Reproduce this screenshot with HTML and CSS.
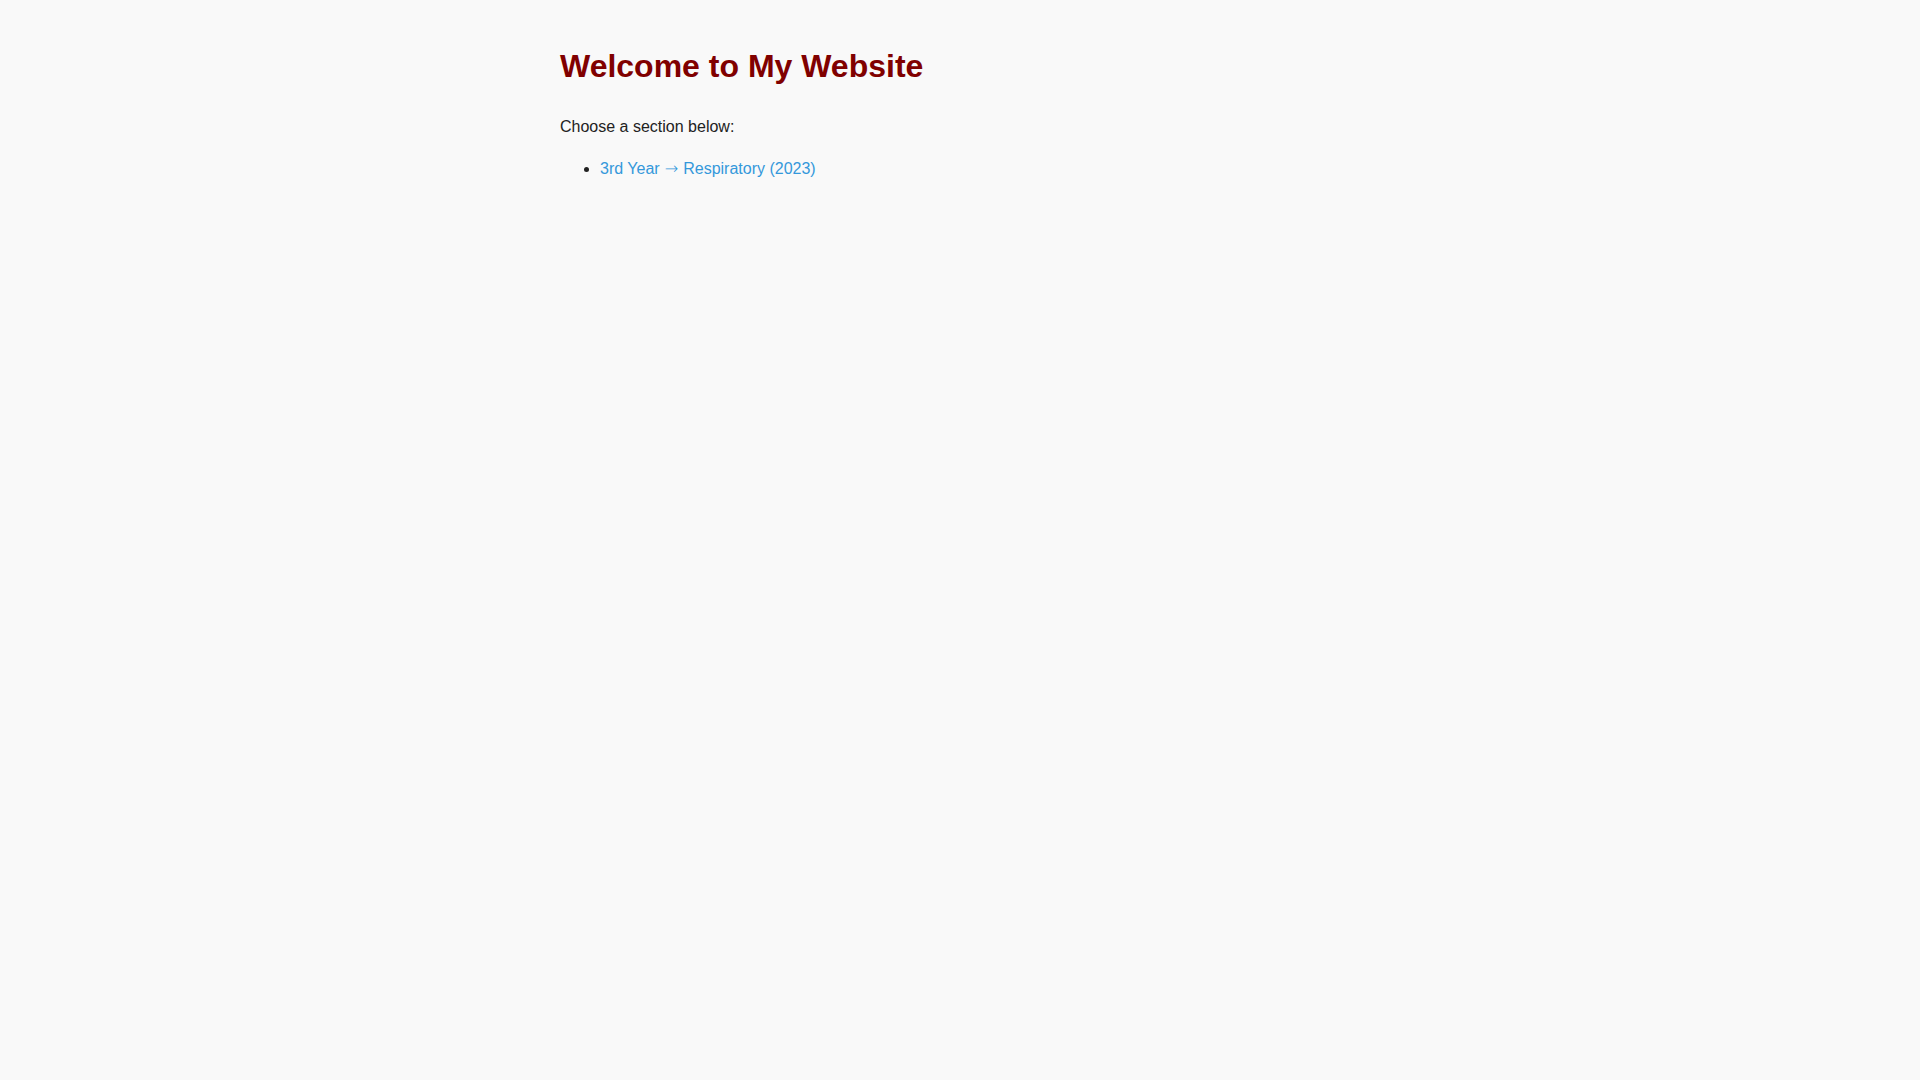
FILE: index.html
```html
<!DOCTYPE html>
<html lang="en">
<head>
<meta charset="utf-8">
<title>My Website</title>
<link rel="stylesheet" href="styles.css">
</head>
<body>
<main class="container">
  <h1 class="title">Welcome to My Website</h1>
  <p class="intro">Choose a section below:</p>
  <ul class="sections">
    <li><a class="section-link" href="#">3rd Year<span class="arrow"> → </span>Respiratory (2023)</a></li>
  </ul>
</main>
</body>
</html>
```
FILE: styles.css
```css
html, body {
  margin: 0;
  background: #f9f9f9;
}
body {
  font-family: "Liberation Sans", Arial, sans-serif;
  line-height: 1.6;
  color: #222;
  padding: 20px;
}
.container {
  max-width: 800px;
  margin: 0 auto;
}
.title {
  color: #800000;
  font-size: 32px;
  margin: 21.44px 0;
}
.intro {
  margin: 16px 0;
}
.sections {
  margin: 16px 0;
  padding-left: 40px;
}
.section-link {
  color: #3498db;
  text-decoration: none;
}
.arrow {
  font-family: "DejaVu Sans", sans-serif;
  font-weight: 300;
}
```
